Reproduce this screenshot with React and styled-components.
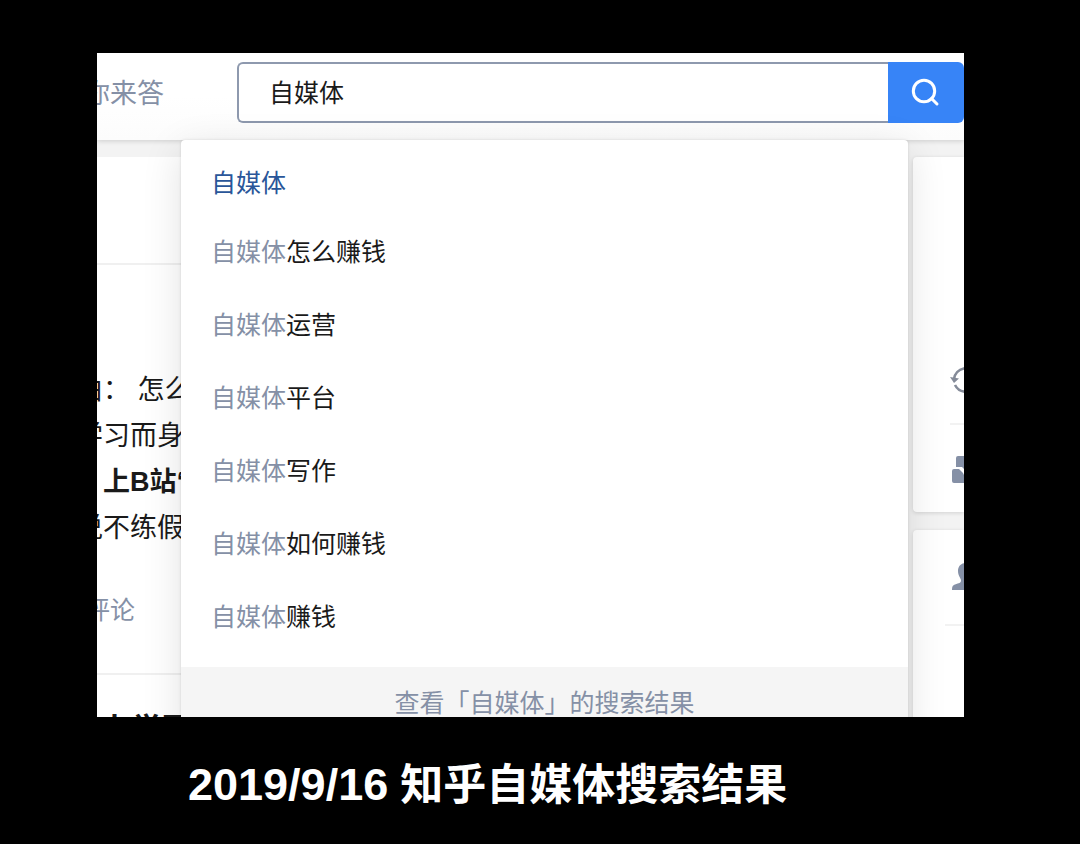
import styled, { createGlobalStyle } from "styled-components";

const GlobalStyle = createGlobalStyle`
    * {
        box-sizing: border-box;
    }

    body {
        margin: 0;
        background: #000;
        color: #1a1a1a;
        font-family: "Liberation Sans", "Noto Sans CJK SC", sans-serif;
    }

    p, h1, h2, ul {
        margin: 0;
        padding: 0;
    }
`;

const Page = styled.main`
    padding: 53px 116px 24px 97px;
`;

const Frame = styled.section`
    position: relative;
    aspect-ratio: 867 / 664;
    overflow: hidden;
    background: #f3f3f3;
`;

const Header = styled.header`
    display: flex;
    align-items: flex-start;
    gap: 73px;
    height: 87px;
    padding-top: 9px;
    background: linear-gradient(#fff 50%, #fcfcfc);
    box-shadow: 0 1px 5px rgba(0, 0, 0, 0.16);
`;

const NavLink = styled.a`
    margin-left: -14px;
    color: #8590a6;
    font-size: 27px;
    line-height: 64px;
    white-space: nowrap;
    text-decoration: none;
`;

const SearchForm = styled.form`
    display: flex;
    flex: 1;
    height: 61px;
`;

const SearchInput = styled.input`
    flex: 1;
    min-width: 0;
    padding: 0 30px 4px;
    border: 2px solid #8e99ae;
    border-right: 0;
    border-radius: 6px 0 0 6px;
    background: #fff;
    color: #1a1a1a;
    font-family: inherit;
    font-size: 25px;
    outline: none;
`;

const SearchButton = styled.button`
    display: flex;
    align-items: center;
    justify-content: center;
    width: 76px;
    padding: 0;
    border: 0;
    border-radius: 0 6px 6px 0;
    background: #3784f7;
`;

const Columns = styled.div`
    display: grid;
    grid-template-columns: 1fr 51px;
    gap: 17px;
    padding-top: 17px;
`;

const Feed = styled.div`
    height: 600px;
    background: #fff;
    overflow: hidden;
`;

const Tabs = styled.div`
    height: 108px;
    border-bottom: 2px solid #f0f0f0;
`;

const Post = styled.article`
    height: 410px;
    padding-top: 102px;
    border-bottom: 2px solid #f0f0f0;
    white-space: nowrap;
`;

const Excerpt = styled.p`
    margin-left: -21px;
    font-size: 27px;
    line-height: 46px;
    font-weight: ${(props) => (props.$bold ? 700 : 400)};
`;

const Comments = styled.a`
    display: block;
    margin: 36px 0 0 -12px;
    color: #8590a6;
    font-size: 25px;
    line-height: 46px;
    text-decoration: none;
`;

const PostTitle = styled.h2`
    padding: 32px 0 0 3px;
    font-size: 31px;
    line-height: 46px;
`;

const Sidebar = styled.aside`
    display: flex;
    flex-direction: column;
    gap: 18px;
`;

const Card = styled.div`
    height: ${(props) => props.$height};
    padding: ${(props) => props.$padding};
    border-radius: 4px 0 0 4px;
    background: #fff;
    box-shadow: 0 1px 4px rgba(0, 0, 0, 0.14);
    overflow: hidden;

    svg {
        display: block;
    }
`;

const CardLine = styled.div`
    height: 2px;
    margin: ${(props) => props.$margin};
    background: #f2f2f2;
`;

const Dropdown = styled.div`
    position: absolute;
    top: 87px;
    left: 84px;
    right: 56px;
    border-radius: 4px;
    background: #fff;
    box-shadow: 0 0 3px rgba(0, 0, 0, 0.12), 0 10px 40px rgba(0, 0, 0, 0.12);
`;

const Suggestions = styled.ul`
    padding: 11px 30px 13px;
    list-style: none;
`;

const Suggestion = styled.li`
    color: ${(props) => (props.$active ? "#2a5699" : "#1a1a1a")};
    font-size: 25px;
    line-height: ${(props) => (props.$active ? "65px" : "73px")};

    span {
        color: #8590a6;
    }
`;

const AllResults = styled.a`
    display: block;
    background: #f5f5f5;
    color: #8590a6;
    font-size: 25px;
    line-height: 73px;
    text-align: center;
    text-decoration: none;
`;

const Caption = styled.h1`
    padding: 36px 0 0 91px;
    color: #fff;
    font-size: 43px;
    line-height: 64px;

    time {
        font-size: 45px;
    }
`;

const endings = ["怎么赚钱", "运营", "平台", "写作", "如何赚钱", "赚钱"];

const SearchIcon = () => (
    <svg width="32" height="32" viewBox="0 0 32 32" fill="none" stroke="#fff" strokeWidth="3" aria-hidden="true">
        <circle cx="14" cy="14" r="10.7" />
        <path d="M21.5 21.5l5.5 5.5" strokeLinecap="round" />
    </svg>
);

const RefreshIcon = () => (
    <svg width="32" height="32" viewBox="0 0 32 32" fill="none" stroke="#858b99" strokeWidth="2.6" aria-hidden="true">
        <path d="M4 14A12.5 12.5 0 0 1 27 9M28 18A12.5 12.5 0 0 1 5 20" />
        <path d="M0 12l9 1.500-5 4.500z" fill="#858b99" stroke="none" />
        <path d="M32 20l-9-1.500 5-4.500z" fill="#858b99" stroke="none" />
    </svg>
);

const BlocksIcon = () => (
    <svg width="30" height="28" viewBox="0 0 30 28" fill="#8590a6" aria-hidden="true">
        <path d="M8 0h16q2 0 2 2v9h-5l-5 4-4-4H6V2q0-2 2-2z" />
        <path d="M4 13h5l4 4 1 2v8H4q-2 0-2-2V15q0-2 2-2zM28 13h-5l-5 4v10h10z" />
    </svg>
);

const PersonIcon = () => (
    <svg width="37" height="28" viewBox="-7 0 37 28" fill="#8590a6" aria-hidden="true">
        <path d="M14 0C9 0 6 3 6 8c0 5 3 7 3 9.500S7 20 3 21.500C1 22.300 0 23 0 27h28c0-4-1-4.700-3-5.500-4-1.500-6-1.500-6-4S22 13 22 8c0-5-3-8-8-8z" />
    </svg>
);

const App = () => {
    return (
        <>
            <GlobalStyle />
            <Page>
                <Frame>
                    <Header>
                        <NavLink href="#">你来答</NavLink>
                        <SearchForm>
                            <SearchInput type="text" aria-label="搜索" defaultValue="自媒体" />
                            <SearchButton type="button" aria-label="搜索">
                                <SearchIcon />
                            </SearchButton>
                        </SearchForm>
                    </Header>

                    <Columns>
                        <Feed>
                            <Tabs />
                            <Post>
                                <Excerpt>由：&nbsp;怎么</Excerpt>
                                <Excerpt>学习而身</Excerpt>
                                <Excerpt $bold>&#12288;上B站“</Excerpt>
                                <Excerpt>说不练假</Excerpt>
                                <Comments href="#">评论</Comments>
                            </Post>
                            <PostTitle>上学更</PostTitle>
                        </Feed>
                        <Sidebar>
                            <Card $height="355px" $padding="208px 0 0 37px">
                                <RefreshIcon />
                                <CardLine $margin="26px 0 31px" />
                                <BlocksIcon />
                            </Card>
                            <Card $height="240px" $padding="33px 0 0 32px">
                                <PersonIcon />
                                <CardLine $margin="33px 0 0" />
                            </Card>
                        </Sidebar>
                    </Columns>

                    <Dropdown>
                        <Suggestions>
                            <Suggestion $active>自媒体</Suggestion>
                            {endings.map((ending) => (
                                <Suggestion key={ending}>
                                    <span>自媒体</span>{ending}
                                </Suggestion>
                            ))}
                        </Suggestions>
                        <AllResults href="#">查看「自媒体」的搜索结果</AllResults>
                    </Dropdown>
                </Frame>
                <Caption><time dateTime="2019-09-16">2019/9/16</time> 知乎自媒体搜索结果</Caption>
            </Page>
        </>
    );
};

export default App;
